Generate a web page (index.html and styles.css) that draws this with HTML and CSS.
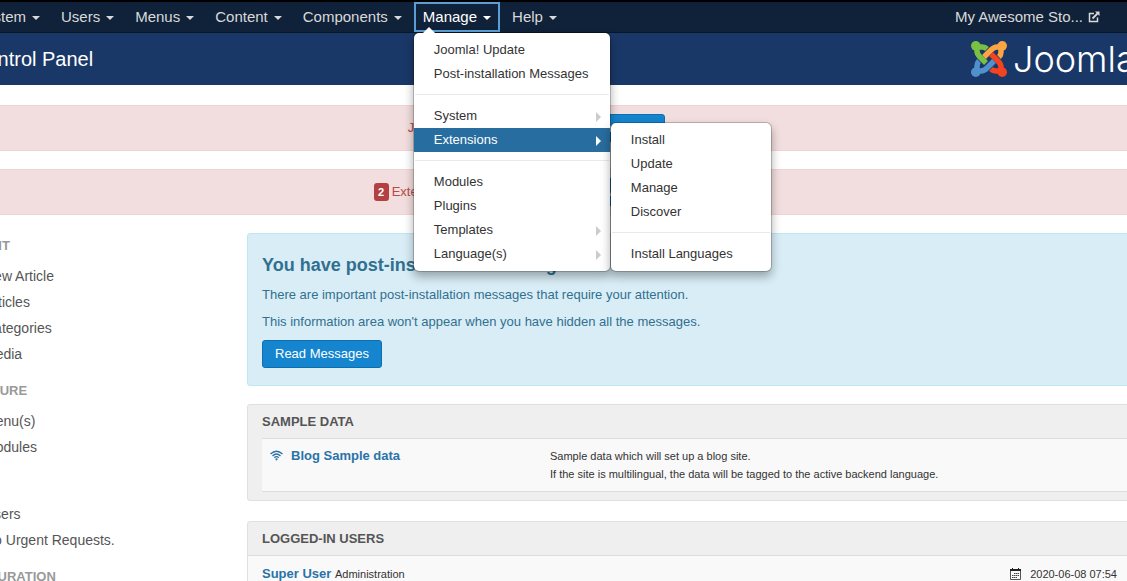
FILE: index.html
```html
<!DOCTYPE html>
<html lang="en">
<head>
<meta charset="utf-8">
<title>Control Panel</title>
<link rel="stylesheet" href="styles.css">
</head>
<body>
<div class="page">
  <nav class="topbar">
    <ul class="nav">
      <li><button class="nav-btn" type="button">System<span class="caret"></span></button></li>
      <li><button class="nav-btn" type="button">Users<span class="caret"></span></button></li>
      <li><button class="nav-btn" type="button">Menus<span class="caret"></span></button></li>
      <li><button class="nav-btn" type="button">Content<span class="caret"></span></button></li>
      <li><button class="nav-btn" type="button">Components<span class="caret"></span></button></li>
      <li class="open">
        <button class="nav-btn active" type="button">Manage<span class="caret"></span></button>
        <ul class="menu main-menu">
          <li><a href="#">Joomla! Update</a></li>
          <li><a href="#">Post-installation Messages</a></li>
          <li class="divider"></li>
          <li><a class="more" href="#">System</a></li>
          <li class="open">
            <a class="more current" href="#">Extensions</a>
            <ul class="menu sub-menu">
              <li><a href="#">Install</a></li>
              <li><a href="#">Update</a></li>
              <li><a href="#">Manage</a></li>
              <li><a href="#">Discover</a></li>
              <li class="divider"></li>
              <li><a href="#">Install Languages</a></li>
            </ul>
          </li>
          <li class="divider"></li>
          <li><a href="#">Modules</a></li>
          <li><a href="#">Plugins</a></li>
          <li><a class="more" href="#">Templates</a></li>
          <li><a class="more" href="#">Language(s)</a></li>
        </ul>
      </li>
      <li><button class="nav-btn" type="button">Help<span class="caret"></span></button></li>
    </ul>
    <a class="site-link" href="#">My Awesome Sto...
      <svg width="12" height="12" viewBox="0 0 12 12" fill="none" stroke="currentColor"><path d="M6 2.500H1.500V10.500H9.500V6.500" stroke-width="1.500"/><path d="M4.500 7.500L9.500 2.500" stroke-width="1.800"/><path d="M7 .5H11.500V5z" fill="currentColor" stroke="none"/></svg>
    </a>
  </nav>
  <header class="header">
    <h1>Control Panel</h1>
    <div class="logo">
      <svg width="36" height="36" viewBox="0 0 36 36" fill="none" stroke-width="5.500">
        <g stroke="#7ac143"><circle cx="4.800" cy="4.800" r="4.800" fill="#7ac143" stroke="none"/><path d="M6 6V10Q6 13 9 16L15 22M5 6H11Q14 6 16 8"/></g>
        <g stroke="#f9a541"><circle cx="31.200" cy="4.800" r="4.800" fill="#f9a541" stroke="none"/><path d="M30 6H26Q23 6 20 9L13 16M30 5V11Q30 14 28 16"/></g>
        <g stroke="#f44321"><circle cx="31.200" cy="31.200" r="4.800" fill="#f44321" stroke="none"/><path d="M30 30V26Q30 23 27 20L20 13M31 30H25Q22 30 20 28"/></g>
        <g stroke="#5091cd"><circle cx="4.800" cy="31.200" r="4.800" fill="#5091cd" stroke="none"/><path d="M6 30H10Q13 30 16 27L23 20M6 31V25Q6 22 8 20"/></g>
      </svg>
      <span>Joomla!</span>
    </div>
  </header>
  <main class="content">
    <div class="alert"><span>Joomla! 3.9.19 is available:</span><button class="btn" type="button">Update Now</button></div>
    <div class="alert"><span class="badge">2</span><span>Extension Update(s) are available:</span><button class="btn" type="button">View Updates</button></div>
    <div class="columns">
      <aside class="sidebar">
        <h2>Content</h2>
        <ul>
          <li><a href="#">New Article</a></li>
          <li><a href="#">Articles</a></li>
          <li><a href="#">Categories</a></li>
          <li><a href="#">Media</a></li>
        </ul>
        <h2>Structure</h2>
        <ul>
          <li><a href="#">Menu(s)</a></li>
          <li><a href="#">Modules</a></li>
        </ul>
        <h2>Users</h2>
        <ul>
          <li><a href="#">Users</a></li>
          <li><a href="#">No Urgent Requests.</a></li>
        </ul>
        <h2>Configuration</h2>
      </aside>
      <div class="panels">
        <section class="info">
          <h2>You have post-installation messages</h2>
          <p>There are important post-installation messages that require your attention.</p>
          <p>This information area won't appear when you have hidden all the messages.</p>
          <button class="btn" type="button">Read Messages</button>
        </section>
        <section class="well">
          <h2>Sample Data</h2>
          <div class="sample">
            <a class="strong-link" href="#">
              <svg width="13" height="11" viewBox="0 0 13 11" fill="none" stroke="currentColor" stroke-width="1.300"><path d="M.5 4Q6.500-1.500 12.500 4M2.500 6Q6.500 2 10.500 6M4.300 7.800Q6.500 5.500 8.700 7.800"/><circle cx="6.500" cy="9.300" r="1.100" fill="currentColor" stroke="none"/></svg>
              Blog Sample data
            </a>
            <p>Sample data which will set up a blog site.<br>If the site is multilingual, the data will be tagged to the active backend language.</p>
          </div>
        </section>
        <section class="well users">
          <h2>Logged-in Users</h2>
          <div class="user">
            <div><a class="strong-link" href="#">Super User</a> <small>Administration</small></div>
            <small class="date">
              <svg width="11" height="12" viewBox="0 0 11 12"><path d="M.5 3V11.500H10.500V3" fill="none" stroke="#555"/><path d="M0 1H2V0H3V1H8V0H9V1H11V3H0z" fill="#222"/><path d="M4 5.500H9M2 7.500H9M2 9.500H7" stroke="#444" stroke-dasharray="1.500 .5"/></svg>
              2020-06-08 07:54
            </small>
          </div>
        </section>
      </div>
    </div>
  </main>
</div>
</body>
</html>
```
FILE: styles.css
```css
* { box-sizing: border-box; }
html { overflow: hidden; }
body { margin: 0; height: 100vh; overflow: hidden; background: #fff; color: #333; font: 13px/18px "Liberation Sans", Arial, sans-serif; }
ul { list-style: none; margin: 0; padding: 0; }
h1, h2, p { margin: 0; }
a { color: inherit; text-decoration: none; }
button { font: inherit; cursor: pointer; }

/* The layout is wider than the window and bleeds off both sides. */
.page { margin: 0 -22px 0 -76px; }

.topbar { display: flex; justify-content: space-between; align-items: center; height: 33px; padding: 0 49px 0 43px; background: #10223a; border-top: 2px solid #000; border-bottom: 1px solid #0a1626; color: #d9d9d9; font-size: 15px; }
.nav { display: flex; gap: 3px; }
.nav > li { position: relative; }
.nav-btn { display: flex; align-items: center; gap: 6px; height: 30px; padding: 0 7px; border: 2px solid transparent; background: none; color: inherit; }
.nav-btn.active { border-color: #5a9fd4; color: #fff; }
.caret { margin-top: 2px; border: 4px solid transparent; border-top-color: currentColor; border-bottom: 0; }
.site-link { display: flex; align-items: center; gap: 5px; }

.menu { position: absolute; z-index: 5; padding: 5px 0; background: #fff; border: 1px solid rgba(0, 0, 0, .2); border-radius: 6px; box-shadow: 0 5px 10px rgba(0, 0, 0, .3); background-clip: padding-box; color: #333; font-size: 13px; white-space: nowrap; }
.menu > li { position: relative; }
.menu a { display: flex; align-items: center; justify-content: space-between; height: 24px; padding: 0 20px; }
.main-menu { top: 30px; left: -1px; width: 198px; }
.main-menu::before { content: ""; position: absolute; top: -6px; left: 9px; border: 6px solid transparent; border-top: 0; border-bottom-color: #fff; }
.sub-menu { top: -6px; left: 196px; width: 162px; }
.divider { height: 1px; margin: 8px 1px 9px; background: #e9e9e9; }
.menu a.more { padding-right: 9px; }
.more::after { content: ""; margin-top: 2px; border: 5px solid transparent; border-left-color: #ccc; border-right: 0; }
.menu a.current { background: #286d9f; color: #fff; }
.menu a.current::after { border-left-color: #fff; }

.header { display: flex; justify-content: space-between; height: 52px; background: #1a3867; color: #fff; }
.header h1 { padding-left: 48px; font-size: 20px; font-weight: 400; line-height: 52px; }
.logo { display: flex; align-items: center; gap: 6px; width: 178px; font: 300 36px/52px Inter, sans-serif; white-space: nowrap; }
.logo svg { flex: none; }

.content { display: grid; gap: 18px; padding: 20px; }
.alert { display: flex; align-items: center; justify-content: center; gap: 3px; height: 46px; background: #f2dede; border: 1px solid #eed3d7; color: #b94a48; }
.badge { min-width: 15px; border-radius: 3px; background: #b34144; color: #fff; font-size: 11px; font-weight: 700; text-align: center; }
.btn { height: 28px; padding: 0 12px; border: 1px solid #0f6fae; border-radius: 3px; background: #1585cf; color: #fff; }

.columns { display: grid; grid-template-columns: 285px 1fr; gap: 18px; margin-right: -20px; }
.sidebar { font-size: 14px; color: #555; line-height: 26px; }
.sidebar h2 { padding: 1px 0 0 3px; color: #999; font-size: 13px; line-height: 24px; text-transform: uppercase; }
.sidebar ul { padding: 5px 0 11px 40px; }

.panels { min-width: 0; }
.info { padding: 13px 14px 17px; background: #d9edf7; border: 1px solid #bce8f1; border-radius: 3px; color: #31708f; }
.info h2 { margin-bottom: 3px; font-size: 18px; line-height: 36px; }
.info p { margin-bottom: 9px; }
.well { margin-top: 18px; padding: 1px 14px 8px; background: #efefef; border: 1px solid #e0e0e0; border-radius: 3px; }
.well h2 { color: #555; font-size: 13px; line-height: 32px; text-transform: uppercase; }
.sample { display: grid; grid-template-columns: 280px 1fr; padding: 8px; height: 54px; background: #f9f9f9; border: solid #ddd; border-width: 1px 0; font-size: 11px; }
.strong-link { color: #2a73a8; font-size: 13px; font-weight: 700; }
.sample .strong-link { display: flex; gap: 8px; }
.strong-link svg { margin-top: 3px; }
.users { margin-top: 20px; }
.users .user { display: flex; justify-content: space-between; margin: 0 -14px; padding: 9px 31px 9px 14px; background: #f9f9f9; border-top: 1px solid #ddd; }
small { font-size: 11px; }
.date { display: flex; align-items: center; gap: 9px; }
```
